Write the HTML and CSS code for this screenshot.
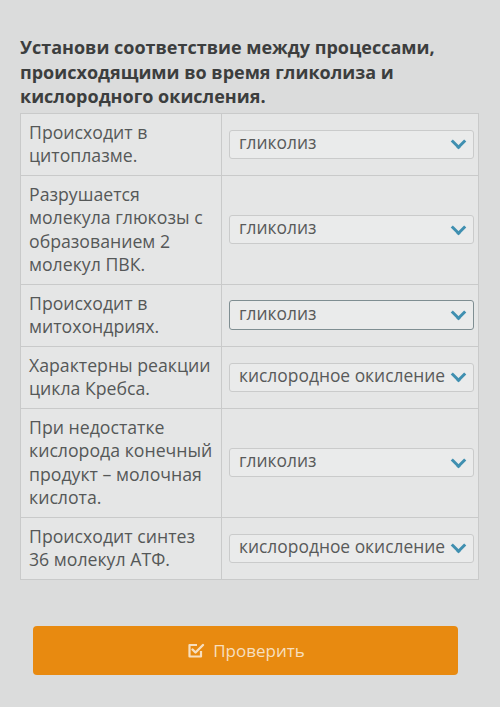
FILE: index.html
```html
<!DOCTYPE html>
<html lang="ru">
<head>
  <meta charset="UTF-8" />
  <meta name="viewport" content="width=device-width, initial-scale=1.0" />
  <title>Гликолиз и кислородное окисление</title>
  <link rel="stylesheet" href="styles.css">
</head>
<body>
  <div class="task">
    <h1 class="task-title">Установи соответствие между процессами, происходящими во время гликолиза и кислородного окисления.</h1>

    <table class="match-table">
      <tbody>
        <tr>
          <td class="statement">Происходит в цитоплазме.</td>
          <td class="answer">
            <div class="pick"><span class="pick-value">гликолиз</span><span class="chevron"></span></div>
          </td>
        </tr>
        <tr>
          <td class="statement">Разрушается молекула глюкозы с образованием 2 молекул ПВК.</td>
          <td class="answer">
            <div class="pick"><span class="pick-value">гликолиз</span><span class="chevron"></span></div>
          </td>
        </tr>
        <tr>
          <td class="statement">Происходит в митохондриях.</td>
          <td class="answer">
            <div class="pick pick-focus"><span class="pick-value">гликолиз</span><span class="chevron"></span></div>
          </td>
        </tr>
        <tr>
          <td class="statement">Характерны реакции цикла Кребса.</td>
          <td class="answer">
            <div class="pick"><span class="pick-value">кислородное окисление</span><span class="chevron"></span></div>
          </td>
        </tr>
        <tr>
          <td class="statement">При недостатке кислорода конечный продукт – молочная кислота.</td>
          <td class="answer">
            <div class="pick"><span class="pick-value">гликолиз</span><span class="chevron"></span></div>
          </td>
        </tr>
        <tr>
          <td class="statement">Происходит синтез 36 молекул АТФ.</td>
          <td class="answer">
            <div class="pick"><span class="pick-value">кислородное окисление</span><span class="chevron"></span></div>
          </td>
        </tr>
      </tbody>
    </table>

    <button class="check-btn" type="button">
      <svg class="check-icon" width="20" height="20" viewBox="0 0 20 20">
        <path d="M15 11V16.5H3.5V5H11" fill="none" stroke="currentColor" stroke-width="2.2" stroke-linejoin="round"/>
        <path d="M6.5 9.5L9.5 12.5L17 5" fill="none" stroke="currentColor" stroke-width="2.4" stroke-linecap="round" stroke-linejoin="round"/>
      </svg>
      Проверить
    </button>
  </div>
</body>
</html>
```

FILE: styles.css
```css
body {
  margin: 0;
  background-color: #dbdcdc;
  font-family: "Open Sans", "DejaVu Sans", sans-serif;
  color: #505252;
}
.task {
  padding: 35px 21px 0 20px;
}
.task-title {
  margin: 0 0 4px 0;
  font-size: 18px;
  line-height: 24.5px;
  font-weight: 700;
  color: #3c3e3e;
}
.match-table {
  width: 100%;
  border-collapse: collapse;
  background-color: #e5e6e6;
}
.match-table td {
  border: 1px solid #c9caca;
  padding: 7px 8px;
  vertical-align: middle;
}
.statement {
  width: 184px;
  font-size: 17.7px;
  line-height: 23.5px;
  color: #555858;
}
.answer {
  padding: 0 4px 0 7px !important;
}
.pick {
  display: flex;
  align-items: center;
  justify-content: space-between;
  height: 27px;
  padding: 0 6px 0 9px;
  border: 1px solid #cacbcb;
  border-radius: 3px;
  background-color: #eaebeb;
  font-size: 17.4px;
  color: #585a5a;
  white-space: nowrap;
  overflow: hidden;
}
.pick-focus {
  border-color: #7f8e92;
  height: 28px;
}
.pick-value {
  margin-top: -5px;
}
.chevron {
  flex: none;
  width: 8px;
  height: 8px;
  margin: -5px 3px 0 2px;
  border-right: 3px solid #3f8fb0;
  border-bottom: 3px solid #3f8fb0;
  transform: rotate(45deg);
}
.check-btn {
  display: flex;
  align-items: center;
  justify-content: center;
  gap: 7px;
  width: 425px;
  height: 49px;
  margin: 46px 0 0 13px;
  border: none;
  border-radius: 4px;
  background-color: #e88a10;
  color: #f7dfbf;
  font-family: "Open Sans", "DejaVu Sans", sans-serif;
  font-size: 17px;
}
.check-icon {
  margin-top: -1px;
}
```
